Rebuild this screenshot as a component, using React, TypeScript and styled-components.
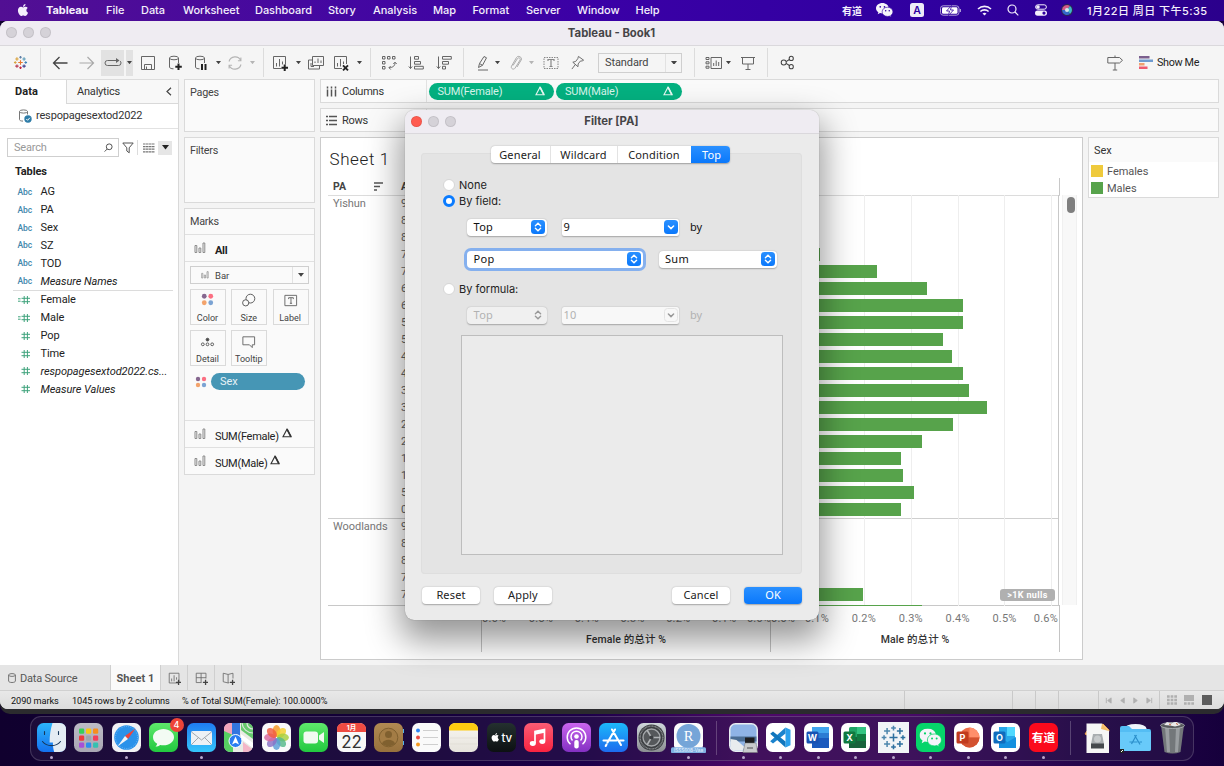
import React from "react";
import styled, { createGlobalStyle, css } from "styled-components";

const ui = `Roboto, "Liberation Sans", sans-serif`;
const mac = `Inter, "Noto Sans CJK SC", sans-serif`;
const lucida = `"Noto Sans", "Open Sans", "Noto Sans CJK SC", sans-serif`;

const Global = createGlobalStyle`
  * { box-sizing: border-box; }
  body { margin: 0; overflow: hidden; font-family: ${ui}; font-size: 11px; color: #333; }
  svg { display: block; flex: none; }
`;

const Desktop = styled.div`
  position: relative;
  width: 1224px;
  height: 766px;
  display: flex;
  flex-direction: column;
  overflow: hidden;
  background: linear-gradient(90deg, #10002e 0, #130038 34%, #1d004a 48%, #4d0868 62%, #480a68 74%, #25064c 88%, #16003c 100%);
`;

/* ---------- menu bar ---------- */
const MenuBar = styled.div`
  display: flex;
  align-items: center;
  height: 21px;
  flex: none;
  padding: 0 16px 1px 0;
  background: linear-gradient(90deg, #520f93 0, #4508a0 25%, #3a00a6 50%, #3000a0 75%, #2b008c 100%);
  color: #f4effc;
  font: 500 11px ${mac};
`;
const AppleSlot = styled.div`
  width: 46px;
  padding-left: 17px;
`;
const MenuItem = styled.div<{ $w: number; $bold?: boolean }>`
  width: ${(p) => p.$w}px;
  white-space: nowrap;
  letter-spacing: -0.05px;
  font-weight: ${(p) => (p.$bold ? 700 : 500)};
`;
const StatusItems = styled.div`
  margin-left: auto;
  display: flex;
  align-items: center;
`;
const StatusSlot = styled.div<{ $w: number }>`
  width: ${(p) => p.$w}px;
  display: flex;
  justify-content: center;
  font-size: 10px;
  font-weight: 700;
  white-space: nowrap;
`;
const Clock = styled.div`
  width: 121px;
  white-space: nowrap;
  letter-spacing: 0.45px;
`;

/* ---------- window ---------- */
const Window = styled.div`
  height: 688px;
  flex: none;
  display: flex;
  flex-direction: column;
  border-radius: 8px;
  overflow: hidden;
  background: #f4f4f4;
`;
const WindowShade = styled.div`
  height: 693px;
  flex: none;
  border-radius: 8px 8px 10px 10px;
  background: linear-gradient(#15042e 0 20px, #2b2b2e 40px);
`;
const TitleBar = styled.div`
  position: relative;
  display: flex;
  align-items: center;
  justify-content: center;
  height: 25px;
  flex: none;
  padding: 0 1px 1px 0;
  background: #efecf2;
  border-bottom: 1px solid #dad8dc;
  font: 700 11.3px ${mac};
  color: #454447;
`;
const Lights = styled.div`
  position: absolute;
  left: 6px;
  top: 6px;
  display: flex;
  gap: 6px;
`;
const Light = styled.div<{ $c?: string }>`
  width: 11px;
  height: 11px;
  border-radius: 50%;
  background: ${(p) => p.$c || "#d5d2d8"};
  border: 1px solid rgba(0, 0, 0, 0.08);
`;

/* ---------- toolbar ---------- */
const Toolbar = styled.div`
  display: flex;
  align-items: center;
  height: 33px;
  flex: none;
  background: #f5f5f5;
  padding-right: 25px;
`;
const Tool = styled.div<{ $w: number; $ml?: number; $on?: boolean }>`
  width: ${(p) => p.$w}px;
  height: 26px;
  margin-left: ${(p) => p.$ml || 0}px;
  flex: none;
  display: flex;
  align-items: center;
  justify-content: center;
  background: ${(p) => (p.$on ? "#e2e2e2" : "transparent")};
`;
const ToolRule = styled.div<{ $ml?: number; $h?: number }>`
  width: 1px;
  height: ${(p) => p.$h || 29}px;
  margin-left: ${(p) => p.$ml || 0}px;
  background: #dcdcdc;
`;
const ToolSpacer = styled.div`
  flex: 1;
`;
const FitSelect = styled.div`
  width: 84px;
  height: 20px;
  margin-left: 7px;
  display: flex;
  align-items: center;
  border: 1px solid #cfcfcf;
  padding-left: 6px;
  letter-spacing: -0.1px;
  color: #444;
`;
const SelectCaret = styled.div`
  margin-left: auto;
  width: 16px;
  height: 100%;
  display: flex;
  align-items: center;
  justify-content: center;
  border-left: 1px solid #e2e2e2;
`;
const ShowMe = styled.div`
  display: flex;
  align-items: center;
  gap: 4px;
  margin-left: 10px;
  color: #222;
  width: 60px;
  white-space: nowrap;
  font-size: 10.8px;
  letter-spacing: -0.35px;
`;

/* ---------- workspace ---------- */
const Workspace = styled.div`
  height: 586px;
  flex: none;
  display: flex;
`;
const DataPane = styled.div`
  width: 179px;
  flex: none;
  background: #fff;
  border-right: 1px solid #d9d9d9;
  border-top: 1px solid #dcdcdc;
`;
const PaneTabs = styled.div`
  display: flex;
  height: 24px;
`;
const PaneTab = styled.div<{ $active?: boolean }>`
  display: flex;
  align-items: center;
  letter-spacing: -0.2px;
  ${(p) =>
    p.$active
      ? css`
          width: 66px;
          padding: 0 0 2px 15px;
          font-weight: 700;
          letter-spacing: 0.1px;
          color: #222;
        `
      : css`
          flex: 1;
          padding: 0 6px 0 10px;
          justify-content: space-between;
          background: #f8f8f8;
          border: solid #d9d9d9;
          border-width: 0 0 1px 1px;
        `}
`;
const SourceRow = styled.div`
  display: flex;
  align-items: center;
  gap: 4px;
  height: 25px;
  padding: 0 0 1px 18px;
  border-bottom: 1px solid #e2e2e2;
  letter-spacing: -0.17px;
`;
const SearchRow = styled.div`
  display: flex;
  align-items: center;
  height: 19px;
  margin: 9px 0 0 7px;
`;
const SearchBox = styled.div`
  width: 112px;
  height: 19px;
  display: flex;
  align-items: center;
  justify-content: space-between;
  padding: 0 5px 0 6px;
  border: 1px solid #cfcfcf;
  color: #999;
  letter-spacing: -0.2px;
`;
const SearchViews = styled.div`
  margin-left: 2px;
`;
const SmallButton = styled.div`
  width: 14px;
  height: 14px;
  margin-left: 2px;
  display: flex;
  align-items: center;
  justify-content: center;
  background: #e6e6e6;
`;
const TablesTitle = styled.div`
  padding: 0 0 0 15px;
  height: 26px;
  line-height: 29px;
  font-weight: 700;
  letter-spacing: -0.15px;
  color: #222;
`;
const FieldRow = styled.div<{ $italic?: boolean }>`
  display: flex;
  align-items: center;
  height: 17.85px;
  padding-left: 17.5px;
  color: #222;
  letter-spacing: ${(p) => (p.$italic ? "-0.07px" : "-0.1px")};
  white-space: nowrap;
  font-style: ${(p) => (p.$italic ? "italic" : "normal")};
`;
const FieldKind = styled.div`
  width: 23px;
  font: 500 8.5px ${ui};
  color: #3f87ac;
  display: flex;
  align-items: center;
`;
const FieldRule = styled.div`
  height: 1px;
  margin: 0 5px 0 13px;
  background: #dcdcdc;
`;

const Cards = styled.div`
  width: 131px;
  margin-left: 5px;
  flex: none;
  display: flex;
  flex-direction: column;
  gap: 5px;
`;
const Card = styled.div<{ $h: number }>`
  height: ${(p) => p.$h}px;
  background: #fafafa;
  border: 1px solid #dadada;
  color: #444;
`;
const CardTitle = styled.div`
  height: 25px;
  line-height: 25px;
  padding-left: 5px;
  font-size: 10.8px;
  letter-spacing: -0.25px;
`;
const MarkHead = styled.div<{ $bold?: boolean }>`
  display: flex;
  align-items: center;
  height: 27px;
  padding-left: 9px;
  border-top: 1px solid #e0e0e0;
  color: #222;
  font-weight: ${(p) => (p.$bold ? 700 : 400)};
  letter-spacing: -0.28px;
`;
const MarkName = styled.div`
  margin: 5px 0 0 9px;
`;
const MarkDelta = styled.div`
  margin: -3px 0 0 3px;
`;
const MarkBody = styled.div`
  height: 159px;
  border-top: 1px solid #e0e0e0;
  padding: 4px 5px 0;
`;
const MarkType = styled.div`
  display: flex;
  align-items: center;
  gap: 6px;
  width: 119px;
  height: 18px;
  border: 1px solid #cfcfcf;
  padding-left: 10px;
  font-size: 9.5px;
`;
const Tiles = styled.div`
  display: grid;
  grid-template-columns: repeat(3, 36px);
  grid-auto-rows: 36px;
  gap: 5px 5.3px;
  margin-top: 5px;
`;
const Tile = styled.div`
  border: 1px solid #dadada;
  display: flex;
  flex-direction: column;
  align-items: center;
  justify-content: space-between;
  padding: 3px 1px 1px 0;
  font-size: 9px;
`;
const MarkPillRow = styled.div`
  display: flex;
  align-items: center;
  gap: 4px;
  margin: 7px 0 0 5px;
`;
const BluePill = styled.div`
  width: 94px;
  height: 17px;
  line-height: 17px;
  border-radius: 9px;
  padding-left: 9px;
  background: #4696b5;
  color: #e6f2f7;
  letter-spacing: -0.1px;
`;

const Right = styled.div`
  flex: 1;
  margin: 0 5px 5px 5px;
  display: flex;
  flex-direction: column;
  gap: 5px;
`;
const Shelf = styled.div`
  display: flex;
  align-items: center;
  height: 24px;
  background: #fafafa;
  border: 1px solid #dadada;
  flex: none;
`;
const ShelfName = styled.div`
  display: flex;
  align-items: center;
  gap: 5px;
  width: 105.5px;
  height: 100%;
  padding-left: 5px;
  border-right: 1px solid #e2e2e2;
  letter-spacing: -0.25px;
`;
const GreenPill = styled.div`
  display: flex;
  align-items: center;
  justify-content: space-between;
  width: 125.5px;
  height: 17px;
  margin-left: 2px;
  padding: 0 9px;
  border-radius: 9px;
  background: #04b180;
  color: #d8f5ec;
  letter-spacing: -0.18px;
`;
const SheetRow = styled.div`
  display: flex;
  gap: 5px;
  height: 524px;
`;
const Sheet = styled.div`
  width: 763px;
  background: #fff;
  border: 1px solid #cbcbcb;
  padding-left: 7px;
  overflow: hidden;
`;
const SheetTitle = styled.div`
  height: 40px;
  padding-left: 1.5px;
  font: 300 17px/42px ${ui};
  letter-spacing: 0.6px;
  color: #222;
`;
const HeadRow = styled.div`
  display: flex;
  height: 18px;
  width: 732px;
  border-bottom: 1px solid #dcdcdc;
  border-right: 1px solid #c8c8c8;
  font: 700 10.5px/18px ${ui};
  align-items: center;
  color: #444;
`;
const PaCell = styled.div`
  width: 73px;
  padding-left: 5px;
  display: flex;
  align-items: center;
  justify-content: space-between;
  padding-right: 18px;
`;
const ChartArea = styled.div`
  display: flex;
  height: 410px;
  margin-top: -1px;
`;
const ChartTable = styled.div`
  width: 731px;
  height: 411px;
  overflow: hidden;
  background: linear-gradient(#c8c8c8, #c8c8c8) bottom / 100% 1px no-repeat;
`;
const Group = styled.div`
  display: flex;
  margin-bottom: -1px;
  border-bottom: 1px solid #cfcfcf;
`;
const GroupName = styled.div`
  width: 73px;
  padding: 0 0 0 5px;
  line-height: 17px;
  font-size: 11px;
  letter-spacing: -0.05px;
  color: #777;
`;
const Ages = styled.div`
  width: 80px;
  color: #666;
  letter-spacing: 0.4px;
`;
const Age = styled.div`
  height: 17px;
  line-height: 18px;
`;
const Pane = styled.div<{ $male?: boolean }>`
  width: 289px;
  border-left: 1px solid #d4d4d4;
  ${(p) =>
    p.$male &&
    css`
      background: repeating-linear-gradient(90deg, transparent 0 45.9px, #eeeeee 45.9px 46.9px);
      border-right: 1px solid #c8c8c8;
    `}
`;
const BarRow = styled.div`
  height: 17px;
  padding-top: 2px;
`;
const Bar = styled.div`
  height: 13px;
  background: #57a34b;
`;
const ScrollTrack = styled.div`
  width: 15px;
  height: 410px;
  margin-left: 3px;
  background: #f8f8f8;
  border: solid #f0f0f0;
  border-width: 0 1px;
  padding: 2px 0 0 4px;
`;
const ScrollThumb = styled.div`
  width: 8px;
  height: 16px;
  border-radius: 4px;
  background: #7f7f7f;
`;
const AxisRow = styled.div`
  display: flex;
  margin-left: 153px;
  height: 47px;
`;
const Axis = styled.div<{ $last?: boolean }>`
  width: ${(p) => (p.$last ? 290 : 289)}px;
  border-left: 1px solid #c4c4c4;
  border-right: ${(p) => (p.$last ? "1px solid #c4c4c4" : "0")};
  color: #777;
`;
const Ticks = styled.div`
  display: flex;
  height: 23px;
  line-height: 27px;
  letter-spacing: 0.2px;
`;
const Tick = styled.div<{ $w: number; $align?: string }>`
  width: ${(p) => p.$w}px;
  flex: none;
  text-align: ${(p) => p.$align || "center"};
`;
const AxisTitle = styled.div`
  text-align: center;
  font: 500 10.5px/24px Roboto, "Noto Sans CJK SC", sans-serif;
  letter-spacing: 0.1px;
  color: #333;
`;
const Nulls = styled.div`
  position: absolute;
  left: 1000px;
  top: 589px;
  width: 55px;
  height: 12px;
  border-radius: 3px;
  background: #b0b0b0;
  color: #fff;
  text-align: center;
  font: 700 9px/12px ${ui};
  letter-spacing: 0.35px;
`;
const Legend = styled.div`
  width: 131px;
  height: 61px;
  background: #fff;
  border: 1px solid #dadada;
`;
const LegendTitle = styled.div`
  height: 24px;
  line-height: 25px;
  padding-left: 5px;
  letter-spacing: -0.1px;
  background: #fafafa;
`;
const LegendItem = styled.div`
  display: flex;
  align-items: center;
  gap: 4px;
  height: 17.2px;
  padding: 1px 0 0 2px;
  letter-spacing: -0.05px;
  color: #555;
`;
const Swatch = styled.div<{ $c: string }>`
  width: 12px;
  height: 12px;
  background: ${(p) => p.$c};
`;

const SheetTabs = styled.div`
  display: flex;
  height: 26px;
  flex: none;
  background: #e5e5e5;
  border-bottom: 1px solid #d0d0d0;
`;
const SheetTab = styled.div<{ $w: number; $active?: boolean }>`
  width: ${(p) => p.$w}px;
  display: flex;
  align-items: center;
  justify-content: ${(p) => (p.$w > 100 ? "flex-start" : "center")};
  padding: 1px 0 0 ${(p) => (p.$w > 100 ? 8 : 0)}px;
  gap: 4px;
  border-right: 1px solid #cfcfcf;
  background: ${(p) => (p.$active ? "#fafafa" : "transparent")};
  font-weight: ${(p) => (p.$active ? 700 : 400)};
  color: #555;
  letter-spacing: ${(p) => (p.$active ? 0.05 : -0.2)}px;
  white-space: nowrap;
`;
const StatusBar = styled.div`
  display: flex;
  align-items: center;
  flex: 1;
  background: linear-gradient(#e8e8e8, #dcdcdc);
  font: 400 9.2px Roboto, sans-serif;
  letter-spacing: -0.08px;
  color: #111;
`;
const StatusText = styled.div<{ $w: number }>`
  width: ${(p) => p.$w}px;
  white-space: nowrap;
`;
const StatusCell = styled.div<{ $w: number }>`
  width: ${(p) => p.$w}px;
  height: 100%;
  border-left: 1px solid #c9c9c9;
  display: flex;
  align-items: center;
  justify-content: space-around;
  padding: 0 3px;
`;

/* ---------- dialog ---------- */
const Dialog = styled.div`
  position: absolute;
  left: 405px;
  top: 110px;
  width: 414px;
  height: 510px;
  border-radius: 9px;
  background: #ebebeb;
  box-shadow: 0 0 1px rgba(0, 0, 0, 0.4), 0 16px 34px 4px rgba(0, 0, 0, 0.42);
  display: flex;
  flex-direction: column;
  font: 400 12px ${lucida};
  color: #222;
`;
const DialogTitle = styled(TitleBar)`
  height: 24px;
  border-radius: 9px 9px 0 0;
`;
const Segments = styled.div`
  position: relative;
  z-index: 1;
  display: flex;
  align-self: flex-start;
  margin: 12px 0 0 86px;
  height: 17px;
  border-radius: 4px;
  background: #fff;
  overflow: hidden;
  box-shadow: 0 0.5px 1.5px rgba(0, 0, 0, 0.3);
`;
const Segment = styled.div<{ $w: number; $on?: boolean }>`
  width: ${(p) => p.$w}px;
  text-align: center;
  line-height: 17px;
  padding-right: 1px;
  font-size: 11px;
  letter-spacing: 0.15px;
  border-left: 1px solid #e3e3e3;
  ${(p) => p.$on && css`background: linear-gradient(#2a90ff, #0a78fb); color: #fff; border: 0; padding: 0 0 0 2px;`}
  &:first-child { border-left: 0; }
`;
const Panel = styled.div`
  margin: -10px 17px 0 16px;
  height: 421px;
  padding: 24px 0 0 22px;
  background: #e4e4e4;
  border-radius: 4px;
  box-shadow: inset 0 0 0 1px #dedede;
`;
const RadioRow = styled.div<{ $mt?: number }>`
  display: flex;
  align-items: center;
  gap: 4px;
  height: 16px;
  margin-top: ${(p) => p.$mt || 0}px;
  font: 400 11px ${mac};
`;
const Radio = styled.div<{ $on?: boolean }>`
  width: 12px;
  height: 12px;
  border-radius: 50%;
  border: ${(p) => (p.$on ? "3.5px solid #0a7bff" : "1px solid #d6d6d6")};
  background: #fff;
`;
const Controls = styled.div<{ $mt: number; $off?: boolean }>`
  display: flex;
  align-items: center;
  margin: ${(p) => p.$mt}px 0 0 24px;
  height: 18px;
  font-size: 11px;
  line-height: 14px;
  color: ${(p) => (p.$off ? "#b2b2b2" : "#111")};
`;
const Popup = styled.div<{ $w: number; $ml?: number; $focus?: boolean; $off?: boolean; $combo?: boolean }>`
  width: ${(p) => p.$w}px;
  height: 17px;
  margin-left: ${(p) => p.$ml || 0}px;
  padding: 0 ${(p) => (p.$combo ? 1 : 1.5)}px 1px ${(p) => (p.$combo ? 2 : 6.5)}px;
  display: flex;
  align-items: center;
  justify-content: space-between;
  border-radius: ${(p) => (p.$combo ? 2 : 4)}px;
  letter-spacing: 0.3px;
  background: ${(p) => (p.$off && !p.$combo ? "#f0f0f0" : p.$off ? "#f8f8f8" : "#fff")};
  box-shadow: ${(p) => (p.$focus ? "0 0 0 3px #85b0ee" : "0 0.5px 1.5px rgba(0,0,0,.28)")};
`;
const Knob = styled.div<{ $off?: boolean; $boxed?: boolean }>`
  width: 14px;
  height: 14px;
  border-radius: 3.5px;
  display: flex;
  align-items: center;
  justify-content: center;
  background: ${(p) => (p.$off ? "transparent" : "linear-gradient(#2a90ff, #0a78fb)")};
  border: ${(p) => (p.$boxed ? "1px solid #e4e4e4" : "0")};
`;
const By = styled.div`
  margin-left: 11px;
`;
const Formula = styled.div`
  width: 322px;
  height: 220px;
  margin: 11px 0 0 18px;
  background: #ebebeb;
  border: 1px solid #bdbdbd;
`;
const Actions = styled.div`
  display: flex;
  margin: 13px 17px 0 17px;
`;
const Action = styled.div<{ $ml?: string; $primary?: boolean }>`
  width: 58px;
  height: 17px;
  margin-left: ${(p) => p.$ml || 0};
  border-radius: 4px;
  text-align: center;
  font-size: 11px;
  line-height: 16.5px;
  letter-spacing: 0.15px;
  background: ${(p) => (p.$primary ? "linear-gradient(#2a90ff, #0a78fb)" : "#fff")};
  color: ${(p) => (p.$primary ? "#fff" : "#222")};
  box-shadow: 0 0.5px 1.5px rgba(0, 0, 0, 0.3);
`;

/* ---------- dock ---------- */
const Dock = styled.div`
  width: 1164px;
  height: 45px;
  margin: 2px 0 0 30px;
  flex: none;
  display: flex;
  padding: 0 1.5px;
  border-radius: 11px;
  border: 1px solid rgba(255, 255, 255, 0.17);
  background: rgba(48, 30, 75, 0.4);
`;
const DockItem = styled.div`
  position: relative;
  width: 37.5px;
  flex: none;
  display: flex;
  flex-direction: column;
  align-items: center;
  padding-top: 5px;
`;
const DockDot = styled.div`
  width: 3px;
  height: 3px;
  margin-top: 3px;
  border-radius: 50%;
  background: #b9a8cc;
`;
const DockRule = styled.div`
  width: 1px;
  height: 34px;
  margin: 4px 8px 0;
  background: rgba(255, 255, 255, 0.22);
`;
const Badge = styled.div`
  position: absolute;
  right: -1px;
  top: 1px;
  width: 14px;
  height: 14px;
  border-radius: 50%;
  background: #ee4438;
  color: #fff;
  text-align: center;
  font: 500 9px/14px Inter, sans-serif;
`;

/* ---------- icons ---------- */
type IcoProps = { s?: number; w?: number; h?: number; c?: string; sw?: number; vb?: string; children: React.ReactNode };
const Ico = ({ s = 16, w, h, c = "#666", sw = 1, vb = "0 0 16 16", children }: IcoProps) => (
  <svg width={w || s} height={h || s} viewBox={vb} fill="none" stroke={c} strokeWidth={sw}>
    {children}
  </svg>
);
const Caret = ({ c = "#444", w = 5 }: { c?: string; w?: number }) => (
  <svg width={w} height={w * 0.65} viewBox="0 0 8 5"><path d="M0 0H8L4 5Z" fill={c} /></svg>
);
const Bars = ({ s = 12 }) => (
  <Ico s={s} vb="0 0 12 12" c="#8a8a8a"><path d="M1 3.5h1.800v7H1zM5 6h1.800v4.500H5zM9 1h1.800v9.500H9z" /></Ico>
);
const Delta = ({ c = "#333", s = 10 }) => (
  <Ico s={s} vb="0 0 10 10" c={c} sw={1.1}><path d="M5 1.2L9 8.8H1Z" /><path d="M5 1.2L9 8.8" strokeWidth="1.7" /></Ico>
);
const Dots = ({ s = 12 }) => (
  <svg width={s} height={s} viewBox="0 0 12 12">
    <circle cx="3" cy="3" r="2.2" fill="#86678f" /><circle cx="9" cy="3" r="2.2" fill="#fb6f82" />
    <circle cx="3" cy="9" r="2.2" fill="#f3a36c" /><circle cx="9" cy="9" r="2.2" fill="#7ba3d3" />
  </svg>
);
const Hash = ({ calc }: { calc?: boolean }) => (
  <Ico w={14} h={10} vb="0 0 14 10" c="#3fa37c" sw={1}>
    <path d="M3.500 3.300h8.500M3.500 6.700h8.500M6.200 1v8M9.400 1v8" />
    {calc && <path d="M0 3.800h2.600M0 6.200h2.600" />}
  </Ico>
);
const Cyl = ({ s = 16, children }: { s?: number; children?: React.ReactNode }) => (
  <Ico s={s}>
    <ellipse cx="7" cy="3" rx="4.5" ry="1.8" /><path d="M2.5 3v9c0 1.2 1.8 1.8 4 1.8M11.5 3v5" />
    {children}
  </Ico>
);
const Burst = ({ s, cols, sw = 1 }: { s: number; cols: string[]; sw?: number }) => {
  const pts = [[8, 8, 2.4], [8, 2.4, 1.4], [8, 13.6, 1.4], [2.4, 8, 1.4], [13.6, 8, 1.4], [4.2, 4.2, 1.8], [11.8, 4.2, 1.8], [4.2, 11.8, 1.8], [11.8, 11.8, 1.8]];
  return (
    <svg width={s} height={s} viewBox="0 0 16 16" fill="none" strokeWidth={sw}>
      {pts.map(([x, y, r], i) => (
        <path key={i} stroke={cols[i % cols.length]} d={`M${x - r} ${y}h${r * 2}M${x} ${y - r}v${r * 2}`} />
      ))}
    </svg>
  );
};
const UpDown = ({ c = "#fff" }) => (
  <Ico s={10} vb="0 0 10 10" c={c} sw={1.4}><path d="M2.4 3.8L5 1.3l2.6 2.5M2.4 6.2L5 8.7l2.6-2.5" strokeLinecap="round" /></Ico>
);
const Down = ({ c = "#fff" }) => (
  <Ico s={10} vb="0 0 10 10" c={c} sw={1.5}><path d="M2.4 4L5 6.6 7.6 4" strokeLinecap="round" /></Ico>
);
const ChartBox = () => <path d="M1.5 1.5h12v12h-12zM4.5 8v3.5M7.5 4v7.5M10.5 6.5v3" />;

/* ---------- data ---------- */
const menus: [string, number][] = [
  ["Tableau", 60], ["File", 35], ["Data", 42], ["Worksheet", 72], ["Dashboard", 73], ["Story", 45],
  ["Analysis", 60], ["Map", 39.5], ["Format", 53.5], ["Server", 51], ["Window", 58.5], ["Help", 30],
];
const dims = ["AG", "PA", "Sex", "SZ", "TOD", "Measure Names"];
const measures = ["Female", "Male", "Pop", "Time", "respopagesextod2022.cs...", "Measure Values"];
const ages = ["90", "85", "80", "75", "70", "65", "60", "55", "50", "45", "40", "35", "30", "25", "20", "15", "10", "5", "0"];
const yishun = [0, 0, 0, 49, 106, 156, 192, 192, 172, 181, 192, 198, 216, 182, 151, 130, 132, 143, 130];
const woodlands = [0, 0, 0, 0, 92, 151];

const PaneGroup = ({ name, labels, values }: { name: string; labels: string[]; values: number[] }) => (
  <Group>
    <GroupName>{name}</GroupName>
    <Ages>{labels.map((a) => <Age key={a}>{a}</Age>)}</Ages>
    <Pane />
    <Pane $male>
      {values.map((v, i) => <BarRow key={i}><Bar style={{ width: v }} /></BarRow>)}
    </Pane>
  </Group>
);

const AxisTicks = ({ labels, first, step, last }: { labels: string[]; first: number; step: number; last: number }) => (
  <Ticks>
    {labels.map((t, i) => (
      <Tick
        key={t}
        $w={i === 0 ? first : i === labels.length - 1 ? last : step}
        $align={i === 0 ? "left" : i === labels.length - 1 ? "right" : "center"}
      >
        {t}
      </Tick>
    ))}
  </Ticks>
);

/* Dock tiles are drawn on a 31 × 31 grid with a rounded background. */
const AppTile = ({ bg, children, id, to }: { bg: string; to?: string; id?: string; children?: React.ReactNode }) => (
  <svg width="31" height="31" viewBox="0 0 31 31">
    {to && (
      <defs><linearGradient id={id} x1="0" y1="0" x2="0" y2="1"><stop offset="0" stopColor={bg} /><stop offset="1" stopColor={to} /></linearGradient></defs>
    )}
    <rect x="1" y="1" width="29" height="29" rx="6.5" fill={to ? `url(#${id})` : bg} />
    {children}
  </svg>
);
const Wechat = ({ s, dot = "#07c160" }: { s: number; dot?: string }) => (
  <svg width={s} height={s * 0.85} viewBox="0 0 20 17">
    <path d="M7.5 0C3.3 0 0 2.7 0 6.2c0 2 1.1 3.6 2.8 4.7L2 13.3l2.8-1.4c.9.2 1.8.4 2.7.4C11.7 12.300 15 9.600 15 6.200S11.700 0 7.500 0Z" fill="#f6f4fa" />
    <path d="M13.500 5C9.900 5 7.200 7.400 7.200 10.400s2.700 5.400 6.300 5.400c.8 0 1.500-.1 2.200-.4l2.300 1.300-.7-2c1.600-1 2.600-2.500 2.600-4.300C19.900 7.400 17 5 13.500 5Z" fill="#f6f4fa" stroke={dot} strokeWidth=".7" />
    <g fill={dot}><circle cx="5" cy="4.500" r="1" /><circle cx="10" cy="4.500" r="1" /><circle cx="11.400" cy="9" r=".9" /><circle cx="15.600" cy="9" r=".9" /></g>
  </svg>
);
const APPLE = "M17.05 20.28c-.98.95-2.05.8-3.08.35-1.09-.46-2.09-.48-3.24 0-1.44.62-2.200.44-3.060-.350C2.790 15.250 3.510 7.590 9.050 7.310c1.350.070 2.290.740 3.080.800 1.180-.240 2.310-.930 3.570-.840 1.510.120 2.650.720 3.400 1.800-3.120 1.870-2.380 5.980.480 7.130-.570 1.500-1.310 2.990-2.540 4.090zM12.030 7.250c-.150-2.230 1.660-4.070 3.740-4.250.290 2.580-2.340 4.500-3.740 4.250z";

const office = (letter: string, dark: string, shape: React.ReactNode) => (
  <AppTile bg="#fff">
    {shape}
    <rect x="3.500" y="9.500" width="12" height="12" rx="1.500" fill={dark} />
    <text x="9.500" y="18.700" fontSize="9" fontWeight="700" fontFamily="Inter, sans-serif" textAnchor="middle" fill="#fff">{letter}</text>
  </AppTile>
);

type DockApp = { art: React.ReactNode; dot?: boolean; badge?: string; rule?: boolean };
const dock: DockApp[] = [
  { dot: true, art: (
    <AppTile id="gf" bg="#2cb5fb" to="#1471ee">
      <path d="M16.500 1h7q6.500 0 6.500 6.500v16q0 6.500-6.500 6.500h-5.300c-1-3-1.300-6-1.300-9.500h-3.300c0-7 1-14 2.900-19.500z" fill="#e4ecf3" />
      <path d="M8.500 9.500v3M22.500 9.500v3M6.500 19.500c4.500 5.500 13.500 5.500 18 0" fill="none" stroke="#17375a" strokeWidth="1.100" strokeLinecap="round" />
    </AppTile>) },
  { art: (
    <AppTile id="gl" bg="#bdbcc6" to="#a9a7b3">
      {["#38cf58", "#f9c712", "#f78e1e", "#ee3a3a", "#a0a4aa", "#f33f5c", "#a650d8", "#2e8eec", "#35c1b0"].map((c, i) => (
        <rect key={c} x={6 + (i % 3) * 7} y={6.500 + Math.floor(i / 3) * 7} width="5.200" height="5.200" rx="1.200" fill={c} />
      ))}
    </AppTile>) },
  { dot: true, art: (
    <AppTile bg="#f2f2f4">
      <circle cx="15.500" cy="15.500" r="12.300" fill="#2b92ea" /><circle cx="15.500" cy="15.500" r="11" fill="none" stroke="#8cc8f7" strokeWidth="1" strokeDasharray=".6 1.300" />
      <path d="M24.500 6.500L14 14l3 3z" fill="#f0453c" /><path d="M6.500 24.500L14 14l3 3z" fill="#f4f4f6" />
    </AppTile>) },
  { badge: "4", art: (
    <AppTile id="gm" bg="#5ee86b" to="#22c93f">
      <path d="M15.500 7c-5.800 0-10.500 3.600-10.500 8.200 0 2.700 1.600 5 4.200 6.500-.2 1-.8 2-1.700 2.800 1.800 0 3.400-.7 4.600-1.600 1 .3 2.200.4 3.400.4 5.800 0 10.500-3.600 10.500-8.100S21.300 7 15.500 7z" fill="#f3fbf3" />
    </AppTile>) },
  { dot: true, art: (
    <AppTile id="gma" bg="#1f7cf2" to="#35c5fb">
      <rect x="5" y="9" width="21" height="14" rx="1.800" fill="#eef1f5" /><path d="M5.500 10l10 8 10-8M5.500 22.500l7-7M25.500 22.500l-7-7" fill="none" stroke="#9a9ea5" strokeWidth=".9" />
    </AppTile>) },
  { art: (
    <AppTile bg="#e9ebe5">
      <path d="M1 14V7.500Q1 1 7.500 1H9v12z" fill="#f2a4bc" /><path d="M1 9l9 4v17H7.500Q1 30 1 23.500z" fill="#56cf62" /><path d="M18 1h5.500Q30 1 30 7.500V17L18 8z" fill="#66c96d" />
      <path d="M19 1a11 11 0 0 0 11 10M24 1a6 6 0 0 0 6 6" fill="none" stroke="#dfe8df" strokeWidth="1.200" />
      <path d="M18 12l12 9v5L18 17z" fill="#fff" /><path d="M20 20l9 7q-2 3-6 3h-3z" fill="#f4b6c8" />
      <path d="M9 1h8v14H9z" fill="#3276df" /><circle cx="12.500" cy="19" r="6.500" fill="#2a7df1" stroke="#fff" strokeWidth="1" /><path d="M12.500 14.500l3.500 8-3.500-1.700L9 22.500z" fill="#fff" />
    </AppTile>) },
  { art: (
    <AppTile bg="#fafafa">
      {["#f59a23", "#f5cf2c", "#a7cf3e", "#55b98a", "#5a9ed8", "#8a72c6", "#d9679e", "#f25c3f"].map((c, i) => (
        <ellipse key={c} cx="15.500" cy="9" rx="3.900" ry="5.900" fill={c} opacity=".82" transform={`rotate(${i * 45} 15.500 15.500)`} />
      ))}
    </AppTile>) },
  { art: (
    <AppTile id="gft" bg="#5ee86b" to="#22c93f"><rect x="5.500" y="9.500" width="14.500" height="12" rx="3" fill="#f0faf0" /><path d="M21 13.500l5-3.500v11l-5-3.500z" fill="#f0faf0" /></AppTile>) },
  { art: (
    <AppTile bg="#f8f8f8">
      <path d="M1 10V7.500Q1 1 7.500 1h16Q30 1 30 7.500V10z" fill="#ee4b42" />
      <text x="15.500" y="8.300" fontSize="6.500" fontWeight="700" fontFamily='Inter, "Noto Sans CJK SC", sans-serif' textAnchor="middle" fill="#fff">1月</text>
      <text x="15.500" y="25.800" fontSize="17" fontFamily="Inter, sans-serif" textAnchor="middle" fill="#333">22</text>
    </AppTile>) },
  { art: (
    <AppTile id="gc" bg="#b18a52" to="#97713d">
      <path d="M30 7v4h1V7zM30 19v4h1v-4z" fill="#56b6e8" /><circle cx="15.500" cy="15.500" r="9.300" fill="#a37c45" stroke="#80602f" strokeWidth="1" /><circle cx="15.500" cy="12.600" r="3.500" fill="#80602f" /><path d="M9 21.500c1.500-5 11.500-5 13 0-3 3.500-10 3.500-13 0z" fill="#80602f" />
    </AppTile>) },
  { art: (
    <AppTile bg="#fafafa">
      {["#2f86f6", "#ee4b42", "#f59a23"].map((c, i) => (
        <g key={c}><circle cx="7" cy={8.500 + i * 7} r="2" fill={c} /><path d={`M12 ${8.500 + i * 7}h15`} stroke="#cfcfcf" strokeWidth="1" /></g>
      ))}
    </AppTile>) },
  { art: <AppTile id="gn" bg="#f8f6f1" to="#e6e3dc"><path d="M1 8.500V7.500Q1 1 7.500 1h16Q30 1 30 7.500v1z" fill="#fdcb10" /><path d="M2 16h27M2 22h27" stroke="#dcd9d0" strokeWidth=".6" /></AppTile> },
  { art: (
    <AppTile id="gtv" bg="#24302f" to="#0c1012">
      <g transform="translate(3.500 9.500) scale(.48)"><path d={APPLE} fill="#fff" /></g>
      <text x="20.800" y="19.800" fontSize="11.500" fontWeight="500" fontFamily="Inter, sans-serif" textAnchor="middle" fill="#fff">tv</text>
    </AppTile>) },
  { art: (
    <AppTile id="gmu" bg="#fb5c74" to="#f92340"><path d="M12 21V9.500l9.500-2V19" fill="none" stroke="#fff" strokeWidth="1.700" /><path d="M12 9.500l9.500-2v3.200l-9.500 2z" fill="#fff" /><ellipse cx="9.800" cy="21.500" rx="3" ry="2.400" fill="#fff" /><ellipse cx="19.300" cy="19.600" rx="3" ry="2.400" fill="#fff" /></AppTile>) },
  { art: (
    <AppTile id="gp" bg="#c965ee" to="#8330c2">
      <g fill="none" stroke="#fff" strokeWidth="1.500"><path d="M9.500 22.300a9.300 9.300 0 1 1 12 0" /><path d="M11.500 18.500a5.500 5.500 0 1 1 8 0" /></g>
      <circle cx="15.500" cy="14.500" r="2.300" fill="#fff" /><rect x="13.300" y="18" width="4.400" height="8.500" rx="2" fill="#fff" />
    </AppTile>) },
  { art: (
    <AppTile id="ga" bg="#1cb8fa" to="#1d6bee"><path d="M17 7.500L9.500 20.500M14 7.500l9 15.500M5.500 18.500h13M22 18.500h3.500M8.500 22.500l-.8 1.500" stroke="#fff" strokeWidth="2.100" strokeLinecap="round" /></AppTile>) },
  { art: (
    <AppTile id="gs" bg="#cfd6da" to="#8b8e92">
      <circle cx="15.500" cy="15.500" r="13" fill="#3c3f42" /><circle cx="15.500" cy="15.500" r="11.400" fill="none" stroke="#8d9093" strokeWidth="1.300" strokeDasharray="1 .5" /><circle cx="15.500" cy="15.500" r="8.500" fill="#55585b" stroke="#a3a6a9" strokeWidth="1.400" /><path d="M15.500 15.500h8.500M15.500 15.500l-4.500-7.500M15.500 15.500l-4.500 7.500" stroke="#b0b3b6" strokeWidth="1.500" /><circle cx="15.500" cy="15.500" r="2" fill="#3c3f42" />
    </AppTile>) },
  { dot: true, rule: true, art: (
    <svg width="35" height="31" viewBox="0 0 35 31">
      <rect x="3" y="1" width="29" height="29" rx="6.500" fill="#fbfbfb" /><circle cx="17.500" cy="14" r="12" fill="#75a5d8" />
      <text x="17.700" y="18.700" fontSize="14.500" fontFamily="Liberation Serif, serif" textAnchor="middle" fill="#fff">R</text>
      <rect x="0" y="25.300" width="35" height="6" rx="1.500" fill="#7fb0e2" />
      <text x="17.500" y="30" fontSize="4.700" fontFamily="Inter, sans-serif" textAnchor="middle" fill="#eaf3fc">ISSS608-Vaa</text>
    </svg>) },
  { dot: true, art: (
    <AppTile bg="#e9edf2">
      <rect x="2.500" y="2.500" width="26" height="26" rx="5" fill="#8fb3e6" /><path d="M2.500 14.500h26v5h-26z" fill="#4b6d94" /><path d="M2.500 17l6 1 8 7-2 3.500H7.500q-5 0-5-5z" fill="#e9ecee" /><path d="M17 15.500h9.500V22H17z" fill="#1d1d1f" /><path d="M17 21h11l1.500 9.500H15z" fill="#c9cbcd" stroke="#77797b" strokeWidth=".5" />
      <path d="M19 26h6" stroke="#77797b" strokeWidth="1.500" />
    </AppTile>) },
  { dot: true, art: (
    <AppTile bg="#fff"><path d="M20.500 5.500l5 2.300v15.500l-5 2.300z" fill="#2aa0ec" /><path d="M20.500 5.500v6L8 21.500l-2.800-2.200z" fill="#1b83cd" /><path d="M20.500 25.600v-6L8 9.500l-2.800 2.200z" fill="#1176bd" /></AppTile>) },
  { dot: true, art: office("W", "#1853b3", <><rect x="9" y="5" width="17" height="7" fill="#42a5ee" /><rect x="9" y="11" width="17" height="5" fill="#2b7cd3" /><rect x="9" y="16" width="17" height="10" fill="#1a5abd" /></>) },
  { dot: true, art: office("X", "#0f7a40", <><rect x="9" y="5" width="17" height="21" rx="1.500" fill="#20a466" /><rect x="17" y="5" width="9" height="7" fill="#33c481" /><rect x="9" y="15" width="17" height="11" fill="#18633c" /><rect x="17" y="12" width="9" height="7" fill="#107c41" /></>) },
  { dot: true, art: (
    <svg width="31" height="31" viewBox="0 0 31 31"><rect width="31" height="31" fill="#f1f4f7" /><g transform="translate(2 2)"><Burst s={27} cols={["#2d6f9f", "#4d86ad"]} sw={0.9} /></g></svg>) },
  { dot: true, art: <AppTile bg="#06d46a"><g transform="translate(4.500 6.500)"><Wechat s={22} dot="#06d46a" /></g></AppTile> },
  { dot: true, art: office("P", "#c13b1e", <><circle cx="16.500" cy="15.500" r="10" fill="#ed6c47" /><path d="M16.500 5.500a10 10 0 0 1 10 10h-10z" fill="#ff8f6b" /><path d="M6.500 15.500h20a10 10 0 0 1-20 0z" fill="#d35230" /></>) },
  { dot: true, art: office("O", "#0f6cbd", <><rect x="9" y="5" width="16" height="18" fill="#28a8ea" /><rect x="17" y="5" width="8" height="9" fill="#50d9ff" /><path d="M9 15l8.500 5 8.500-5v11H9z" fill="#1490df" /></>) },
  { dot: true, rule: true, art: (
    <AppTile bg="#fb0a1c"><text x="15.500" y="19.800" fontSize="11.700" fontWeight="700" fontFamily='"Noto Sans CJK SC", sans-serif' textAnchor="middle" fill="#fff">有道</text></AppTile>) },
  { art: (
    <svg width="31" height="31" viewBox="0 0 31 31"><path d="M21 2l6 6-2 9M5 9l-2 3 4 2" fill="#f2ab5c" stroke="#eea04a" /><path d="M4.500 1.500H20L27 9v22H4.500z" fill="#f6f6f6" /><path d="M20 1.500l7 7.500-8-2z" fill="#f4bd66" /><path d="M11 12h9l2 10H9z" fill="#a9adb0" /><circle cx="15.500" cy="17" r="3.500" fill="#c7cacc" /><rect x="9" y="21.500" width="13" height="5" fill="#45494d" /></svg>) },
  { art: (
    <svg width="31" height="31" viewBox="0 0 31 31"><ellipse cx="15.500" cy="6.500" rx="11" ry="4.500" fill="#eef4fa" /><path d="M0 6q0-2 2-2h7l3 3h17q2 0 2 2v18q0 2-2 2H2q-2 0-2-2z" fill="#54bdf4" /><path d="M0 10h31v17q0 2-2 2H2q-2 0-2-2z" fill="#68cafa" /><path d="M16.500 13l-5 9M14.500 13l5.500 9.500M9.500 20h8M19.500 20h2.500" stroke="#2b8fcb" strokeWidth="1.200" /><path d="M0 27h4v4H0z" fill="#222" /><path d="M1 30l2-2" stroke="#fff" /></svg>) },
  { art: (
    <svg width="31" height="32" viewBox="0 0 31 32"><path d="M4 3h23l-3.500 27q-8 3-16 0z" fill="#73777a" /><path d="M8 5l2 25h3L12 5zM19 5l-1 25h3l2-25z" fill="#9a9ea1" /><ellipse cx="15.500" cy="3.500" rx="12" ry="3" fill="#56595c" stroke="#b6babc" strokeWidth=".8" /><path d="M7 3l3-3 4 1.500L19-.500l5 3.500-6 1.500-5-1z" fill="#e9e9e9" /><path d="M12 2l2 1M19 1.500l2 1" stroke="#c2603c" /></svg>) },
];

export default function App() {
  return (
    <Desktop>
      <Global />
      <MenuBar>
        <AppleSlot><svg width="12" height="14" viewBox="3 2 18 20"><path d={APPLE} fill="#f4effc" /></svg></AppleSlot>
        {menus.map(([m, w], i) => <MenuItem key={m} $w={w} $bold={i === 0}>{m}</MenuItem>)}
        <StatusItems>
          <StatusSlot $w={22}>有道</StatusSlot>
          <StatusSlot $w={43}><Wechat s={17} dot="#3000a0" /></StatusSlot>
          <StatusSlot $w={22}>
            <svg width="14" height="14" viewBox="0 0 14 14"><rect width="14" height="14" rx="2.500" fill="#eeebf8" /><text x="7" y="10.800" fontSize="10.500" fontWeight="600" fontFamily="Inter, sans-serif" textAnchor="middle" fill="#3000a0">A</text></svg>
          </StatusSlot>
          <StatusSlot $w={45}>
            <svg width="22" height="11" viewBox="0 0 22 11"><rect x=".5" y=".8" width="18.500" height="9.400" rx="2.700" fill="none" stroke="#b0a0d8" /><rect x="2" y="2.300" width="15.500" height="6.400" rx="1.300" fill="#fff" /><path d="M11.500 .5L6.500 6h3l-1 4.500L13.500 5h-3z" fill="#fff" stroke="#3000a0" strokeWidth=".8" /><path d="M20.300 4v3" stroke="#b0a0d8" strokeWidth="1.300" /></svg>
          </StatusSlot>
          <StatusSlot $w={23}><Ico w={15} h={11} vb="0 0 15 11" c="#f4effc" sw={1.6}><path d="M1 4a9.400 9.400 0 0 1 13 0M3.400 6.500a6 6 0 0 1 8.200 0" /><path d="M5.500 8.600a3 3 0 0 1 4 0L7.500 10.600z" fill="#f4effc" stroke="none" /></Ico></StatusSlot>
          <StatusSlot $w={33}><Ico s={12} vb="0 0 12 12" c="#f4effc" sw={1.200}><circle cx="5" cy="5" r="4" /><path d="M8 8l3.300 3.300" /></Ico></StatusSlot>
          <StatusSlot $w={23}>
            <svg width="12" height="12" viewBox="0 0 12 12"><rect x=".6" y=".8" width="10.800" height="4.400" rx="2.200" fill="none" stroke="#f4effc" /><circle cx="3" cy="3" r="1.800" fill="#f4effc" /><rect x="0" y="6.500" width="12" height="5.200" rx="2.600" fill="#f4effc" /><circle cx="9" cy="9.100" r="1.600" fill="#3000a0" /></svg>
          </StatusSlot>
          <StatusSlot $w={30}>
            <svg width="12" height="12" viewBox="0 0 12 12"><circle cx="6" cy="6" r="6" fill="#2b2a50" /><path d="M1 6a5 5 0 0 1 8-4L6 6z" fill="#d45a8a" /><path d="M9 2a5 5 0 0 1 0 8L6 6z" fill="#3fb9c9" /><path d="M9 10a5 5 0 0 1-8-4l5 0z" fill="#3569c9" /><circle cx="6" cy="6" r="2" fill="#d5e6ee" /></svg>
          </StatusSlot>
          <StatusSlot $w={5} />
          <Clock>1月22日 周日 下午5:35</Clock>
        </StatusItems>
      </MenuBar>

      <WindowShade>
        <Window>
          <TitleBar><Lights><Light /><Light /><Light /></Lights>Tableau - Book1</TitleBar>
          <Toolbar>
            <Tool $w={40}><Burst s={15} cols={["#e8762c", "#5f7fa8", "#c7203f", "#d9a23c", "#3a7fb5", "#d9a23c", "#5b9bb8", "#b83a52", "#3f3f8f"]} sw={1.2} /></Tool>
            <ToolRule />
            <Tool $w={37}><Ico c="#444" sw={1.3}><path d="M15.500 8H1.500M7.500 2L1.500 8l6 6" /></Ico></Tool>
            <Tool $w={18}><Ico c="#a9a9a9" sw={1.2}><path d="M.5 8h14M8.500 2l6 6-6 6" /></Ico></Tool>
            <Tool $w={23} $ml={5} $on><Ico w={18} vb="0 0 18 16"><path d="M13 5.500H3.500Q1 5.500 1 8t2.500 2.500h11Q17 10.500 17 8q0-1.200-.8-1.900" /><path d="M12 3l3.500 2.500L12 8z" fill="#666" stroke="none" /></Ico></Tool>
            <Tool $w={7} $ml={2} $on><Caret /></Tool>
            <Tool $w={28} $ml={1}><Ico><path d="M1.500 1.500h13v13h-13zM4.500 14.500V9.500h7v5M6.500 11.500v3" /></Ico></Tool>
            <Tool $w={26}><Cyl><path d="M11.500 8.500v6.500M8.300 11.700h6.500" stroke="#222" strokeWidth="2" /></Cyl></Tool>
            <Tool $w={26}><Cyl><path d="M9 9v6M12.500 9v6" stroke="#222" strokeWidth="2" /></Cyl></Tool>
            <Tool $w={8}><Caret /></Tool>
            <Tool $w={25}><Ico c="#b5b5b5" sw={1.100}><path d="M2 6.500A6.300 6.300 0 0 1 13.800 5.500M14 9.500A6.300 6.300 0 0 1 2.200 10.500M13.900 2.500v3.200h-3M2.100 13.500v-3.200h3" /></Ico></Tool>
            <Tool $w={10}><Caret c="#b5b5b5" /></Tool>
            <ToolRule $ml={6} />
            <Tool $w={28} $ml={2}><Ico><ChartBox /><path d="M12.700 9.500V16M9.500 12.700H16" stroke="#f5f5f5" strokeWidth="4" /><path d="M12.700 9.500V16M9.500 12.700H16" stroke="#222" strokeWidth="2" /></Ico></Tool>
            <Tool $w={8}><Caret /></Tool>
            <Tool $w={28}><Ico><path d="M4.500 1.500h11v9h-11zM7 8V6.500M10 8V3.500M13 8V5.500M4.500 5H.5v9h11v-3.500M3 8v3.500h3" /></Ico></Tool>
            <Tool $w={22}><Ico><ChartBox /><path d="M9 9h7v7H9z" fill="#f5f5f5" stroke="none" /><path d="M10 10.300l5 5M15 10.300l-5 5" stroke="#222" strokeWidth="1.900" /></Ico></Tool>
            <Tool $w={8} $ml={3}><Caret /></Tool>
            <ToolRule $ml={7} />
            <Tool $w={27} $ml={4}><Ico><path d="M1.500 1.500h2.500v2.500H1.500zM6.500 1.500H9v2.500H6.500zM11.500 1.500H14v2.500h-2.500zM1.500 6.500h2.500V9H1.500zM1.500 11.500h2.500V14H1.500zM14 7.500c0 3-1.500 5-6 5.200M12.300 9l1.700-1.800L15.700 9M9.700 11L8 12.700l1.700 1.800" /></Ico></Tool>
            <Tool $w={28}><Ico><path d="M2.500 1.500v12M.8 11.500l1.700 2 1.700-2M6.500 1.500h4v2.700h-4zM6.500 6.500h6v2.700h-6zM6.500 11.300h8.800V14H6.500z" /></Ico></Tool>
            <Tool $w={28}><Ico><path d="M2.500 1.500v12M.8 11.500l1.700 2 1.700-2M6.500 1.500h8.800v2.700H6.500zM6.500 6.500h6v2.700h-6zM6.500 11.300h3V14h-3z" /></Ico></Tool>
            <ToolRule $ml={5} />
            <Tool $w={21} $ml={8}><Ico><path d="M3.500 12.500l1-4L9 1.500l2.500 1.300-4 7.500zM4.500 8.500l3 1.800M3 15h10" /></Ico></Tool>
            <Tool $w={9}><Caret /></Tool>
            <Tool $w={24} $ml={2}><Ico c="#ababab"><path d="M5 10.500l4.500-7c1-1.500 3.500-.2 2.600 1.500L7 13.200c-1.300 2-4.700.3-3.500-2L8.500 2.500c1.800-2.600 6-.3 4.700 2.500L9 12" /></Ico></Tool>
            <Tool $w={7}><Caret c="#b5b5b5" /></Tool>
            <Tool $w={26} $ml={3}><Ico c="#888"><path d="M1 2.500h14v11H1z" strokeDasharray="1.500 1" /><path d="M5 6V4.500h6V6M8 4.500v7M6.500 11.500h3" strokeWidth="1.200" /></Ico></Tool>
            <Tool $w={27}><Ico s={15}><path d="M9 1.500l5.500 4-1.500.8-2 .2-2.300 3-.2 3L3 7.700l3-.8 2.300-3zM5.800 10L2 15" /></Ico></Tool>
            <FitSelect>Standard<SelectCaret><Caret w={6} /></SelectCaret></FitSelect>
            <ToolRule $ml={12} />
            <Tool $w={25} $ml={6}><Ico w={17} vb="0 0 17 16"><path d="M1 2.500h3v2H1zM1 6.800h3v2H1zM1 11.200h3v2H1zM6 2.500h10.500v11H6zM8.700 11V8M11.200 11V5.500M13.700 11V7" /></Ico></Tool>
            <Tool $w={5}><Caret /></Tool>
            <Tool $w={28} $ml={3}><Ico><path d="M1 2.500h14M2.500 2.500v6.500h11V2.500M8 9v5M5.500 14.500h5" /></Ico></Tool>
            <ToolRule $ml={5} />
            <Tool $w={28} $ml={5}><Ico s={15} c="#444" sw={1.100}><circle cx="4" cy="8" r="2.700" /><circle cx="12" cy="3.600" r="2.200" /><circle cx="12" cy="12.400" r="2.200" /><path d="M6.500 7l3.500-2.200M6.500 9l3.500 2.200" /></Ico></Tool>
            <ToolSpacer />
            <Tool $w={28}><Ico><path d="M8 .5v2M.8 2.500h11.700L15.500 5.300l-3 2.700H.8zM8 8v7M5.800 15h4.400" /></Ico></Tool>
            <ShowMe>
              <svg width="14" height="13" viewBox="0 0 14 13"><path d="M0 0h10.500v2.400H0z" fill="#7b5f8e" /><path d="M0 3.500h14v2.400H0z" fill="#6f9bd0" /><path d="M0 7h5.500v2.400H0z" fill="#f0a070" /><path d="M0 10.500h8.500V13H0z" fill="#ef5b70" /></svg>
              Show Me
            </ShowMe>
          </Toolbar>

          <Workspace>
            <DataPane>
              <PaneTabs>
                <PaneTab $active>Data</PaneTab>
                <PaneTab>Analytics<Ico w={6} h={9} vb="0 0 6 9" c="#444" sw={1.2}><path d="M5 .8L1 4.500l4 3.700" /></Ico></PaneTab>
              </PaneTabs>
              <SourceRow>
                <Ico s={14} vb="0 0 14 14" c="#777"><ellipse cx="5.500" cy="2.500" rx="4" ry="1.600" /><path d="M1.500 2.500v8c0 1 1.500 1.600 3.500 1.600M9.500 2.500v3" /><circle cx="10" cy="10" r="3.700" fill="#2f7da8" stroke="none" /><path d="M8.300 10l1.300 1.300 2.200-2.500" stroke="#fff" /></Ico>
                respopagesextod2022
              </SourceRow>
              <SearchRow>
                <SearchBox>Search<Ico s={9} vb="0 0 9 9" c="#555"><circle cx="5.200" cy="3.800" r="2.900" /><path d="M3.200 6L.6 8.600" /></Ico></SearchBox>
                <Tool $w={18}><Ico s={12} vb="0 0 12 12" c="#555"><path d="M.8 1h10.400L7.200 5.800v5L4.800 9V5.800z" /></Ico></Tool>
                <ToolRule $h={15} />
                <SearchViews>
                  <svg width="16" height="10" viewBox="0 0 16 10"><path d="M3 1h11.500M3 3.600h11.500M3 6.200h11.500M3 8.800h11.500" stroke="#777" strokeWidth="1.200" strokeDasharray="2.600 .4" /></svg>
                </SearchViews>
                <SmallButton><Caret c="#222" w={7} /></SmallButton>
              </SearchRow>
              <TablesTitle>Tables</TablesTitle>
              {dims.map((d, i) => <FieldRow key={d} $italic={i === 5}><FieldKind>Abc</FieldKind>{d}</FieldRow>)}
              <FieldRule />
              {measures.map((m, i) => <FieldRow key={m} $italic={i > 3}><FieldKind><Hash calc={i < 2} /></FieldKind>{m}</FieldRow>)}
            </DataPane>

            <Cards>
              <Card $h={53}><CardTitle>Pages</CardTitle></Card>
              <Card $h={66}><CardTitle>Filters</CardTitle></Card>
              <Card $h={267}>
                <CardTitle>Marks</CardTitle>
                <MarkHead $bold><Bars /><MarkName>All</MarkName></MarkHead>
                <MarkBody>
                  <MarkType><Bars s={8} />Bar<SelectCaret><Caret w={6} /></SelectCaret></MarkType>
                  <Tiles>
                    <Tile><Dots s={13} />Color</Tile>
                    <Tile><Ico s={15} c="#555"><circle cx="10" cy="6" r="4.700" /><circle cx="5" cy="10.500" r="3.300" fill="#fafafa" /></Ico>Size</Tile>
                    <Tile><Ico s={15} c="#666"><path d="M2 2.500h12.500v11H2z" /><path d="M6 6.500V5h5v1.500M8.500 5v6M7.300 11h2.400" /></Ico>Label</Tile>
                    <Tile><Ico s={15} c="#555"><circle cx="8" cy="6" r="1.500" fill="#444" /><circle cx="3" cy="11" r="1.500" /><circle cx="8" cy="11" r="1.500" /><circle cx="13" cy="11" r="1.500" /></Ico>Detail</Tile>
                    <Tile><Ico s={15} c="#666"><path d="M2 3h12.500v8.500h-2.500v3L9 11.500H2z" /></Ico>Tooltip</Tile>
                  </Tiles>
                  <MarkPillRow><Dots /><BluePill>Sex</BluePill></MarkPillRow>
                </MarkBody>
                <MarkHead><Bars /><MarkName>SUM(Female)</MarkName><MarkDelta><Delta /></MarkDelta></MarkHead>
                <MarkHead><Bars /><MarkName>SUM(Male)</MarkName><MarkDelta><Delta /></MarkDelta></MarkHead>
              </Card>
            </Cards>

            <Right>
              <Shelf>
                <ShelfName><Ico s={11} vb="0 0 11 11" c="#555" sw={1.500}><path d="M1.500 .5v2M5.500 .5v2M9.500 .5v2M1.500 3.500v7M5.500 3.500v7M9.500 3.500v7" /></Ico>Columns</ShelfName>
                <GreenPill>SUM(Female)<Delta c="#e5f8f1" /></GreenPill>
                <GreenPill>SUM(Male)<Delta c="#e5f8f1" /></GreenPill>
              </Shelf>
              <Shelf>
                <ShelfName><Ico s={11} vb="0 0 11 11" c="#555" sw={1.500}><path d="M0 1.500h2M0 5.500h2M0 9.500h2M3 1.500h8M3 5.500h8M3 9.500h8" /></Ico>Rows</ShelfName>
              </Shelf>
              <SheetRow>
                <Sheet>
                  <SheetTitle>Sheet 1</SheetTitle>
                  <HeadRow>
                    <PaCell>PA<Ico w={9} h={9} vb="0 0 9 9" c="#555" sw={1.400}><path d="M0 1h9M0 4.500h6M0 8h3" /></Ico></PaCell>
                    AG
                  </HeadRow>
                  <ChartArea>
                    <ChartTable>
                      <PaneGroup name="Yishun" labels={ages} values={yishun} />
                      <PaneGroup name="Woodlands" labels={ages.slice(0, 5)} values={woodlands} />
                    </ChartTable>
                    <ScrollTrack><ScrollThumb /></ScrollTrack>
                  </ChartArea>
                  <AxisRow>
                    <Axis>
                      <AxisTicks labels={["0.6%", "0.5%", "0.4%", "0.3%", "0.2%", "0.1%", "0.0%"]} first={36} step={45.8} last={23} />
                      <AxisTitle>Female 的总计 %</AxisTitle>
                    </Axis>
                    <Axis $last>
                      <AxisTicks labels={["0.0%", "0.1%", "0.2%", "0.3%", "0.4%", "0.5%", "0.6%"]} first={22.5} step={46.9} last={30} />
                      <AxisTitle>Male 的总计 %</AxisTitle>
                    </Axis>
                  </AxisRow>
                </Sheet>
                <Legend>
                  <LegendTitle>Sex</LegendTitle>
                  <LegendItem><Swatch $c="#efca3c" />Females</LegendItem>
                  <LegendItem><Swatch $c="#57a34b" />Males</LegendItem>
                </Legend>
              </SheetRow>
            </Right>
          </Workspace>

          <SheetTabs>
            <SheetTab $w={111}><Ico w={8} h={10} vb="0 0 8 10" c="#777"><ellipse cx="4" cy="2" rx="3.400" ry="1.400" /><path d="M.6 2v6c0 2 6.800 2 6.800 0V2" /></Ico>Data Source</SheetTab>
            <SheetTab $w={50} $active>Sheet 1</SheetTab>
            <SheetTab $w={27}><Ico s={13}><ChartBox /><path d="M13 9.500V16M9.700 12.800H16" stroke="#444" strokeWidth="1.600" /></Ico></SheetTab>
            <SheetTab $w={27}><Ico s={13}><path d="M13.500 8V1.500h-12v11.500H8M1.500 7h12M7.500 1.500V13" /><path d="M13 9.500V16M9.700 12.800H16" stroke="#444" strokeWidth="1.600" /></Ico></SheetTab>
            <SheetTab $w={27}><Ico s={13}><path d="M7.500 3v10.500L1.500 12V1.500zM7.500 3l6-1.500V8M7.500 13.500l1.500-.5" /><path d="M13 9.500V16M9.700 12.800H16" stroke="#444" strokeWidth="1.600" /></Ico></SheetTab>
          </SheetTabs>
          <StatusBar>
            <StatusText $w={11} />
            <StatusText $w={61}>2090 marks</StatusText>
            <StatusText $w={110}>1045 rows by 2 columns</StatusText>
            <StatusText $w={722}>% of Total SUM(Female): 100.0000%</StatusText>
            <StatusCell $w={108} /><StatusCell $w={23} /><StatusCell $w={23} /><StatusCell $w={40} />
            <StatusCell $w={61}>
              {["M1.500 1v6M7 1L3 4l4 3z", "M6 1L2 4l4 3z", "M2 1l4 3-4 3z", "M6.500 1v6M1 1l4 3-4 3z"].map((d) => (
                <Ico key={d} s={7} vb="0 0 8 8" c="#b0b0b0"><path d={d} fill="#b0b0b0" /></Ico>
              ))}
            </StatusCell>
            <StatusCell $w={60}>
              <svg width="10" height="10" viewBox="0 0 10 10"><path d="M0 1.500h10M0 5h10M0 8.500h10" stroke="#b0b0b0" strokeWidth="2.600" strokeDasharray="2.700 .95" /></svg>
              <svg width="10" height="10" viewBox="0 0 10 10"><path d="M0 0h10v6H0z" fill="#b0b0b0" /><path d="M0 8.500h10" stroke="#b0b0b0" strokeWidth="2.600" strokeDasharray="2.700 .95" /></svg>
              <svg width="10" height="10" viewBox="0 0 10 10"><path d="M0 0h10v10H0z" fill="#5c5c5c" /></svg>
            </StatusCell>
          </StatusBar>
        </Window>
      </WindowShade>

      <Dock>
        {dock.map((d, i) => (
          <React.Fragment key={i}>
            <DockItem>{d.art}{d.badge && <Badge>{d.badge}</Badge>}{d.dot && <DockDot />}</DockItem>
            {d.rule && <DockRule />}
          </React.Fragment>
        ))}
      </Dock>

      <Nulls>&gt;1K nulls</Nulls>

      <Dialog>
        <DialogTitle><Lights><Light $c="#ff5b50" /><Light /><Light /></Lights>Filter [PA]</DialogTitle>
        <Segments>
          <Segment $w={59}>General</Segment><Segment $w={67}>Wildcard</Segment><Segment $w={74}>Condition</Segment><Segment $w={39} $on>Top</Segment>
        </Segments>
        <Panel>
          <RadioRow><Radio />None</RadioRow>
          <RadioRow><Radio $on />By field:</RadioRow>
          <Controls $mt={9}>
            <Popup $w={79.5}>Top<Knob><UpDown /></Knob></Popup>
            <Popup $w={117.5} $ml={15} $combo>9<Knob><Down /></Knob></Popup>
            <By>by</By>
          </Controls>
          <Controls $mt={14}>
            <Popup $w={175.5} $focus>Pop<Knob><UpDown /></Knob></Popup>
            <Popup $w={118} $ml={16}>Sum<Knob><UpDown /></Knob></Popup>
          </Controls>
          <RadioRow $mt={13}><Radio />By formula:</RadioRow>
          <Controls $mt={9} $off>
            <Popup $w={79.5} $off>Top<Knob $off><UpDown c="#999" /></Knob></Popup>
            <Popup $w={117.5} $ml={15} $combo $off>10<Knob $off $boxed><Down c="#999" /></Knob></Popup>
            <By>by</By>
          </Controls>
          <Formula />
        </Panel>
        <Actions>
          <Action>Reset</Action><Action $ml="14px">Apply</Action><Action $ml="auto">Cancel</Action><Action $ml="14px" $primary>OK</Action>
        </Actions>
      </Dialog>
    </Desktop>
  );
}
